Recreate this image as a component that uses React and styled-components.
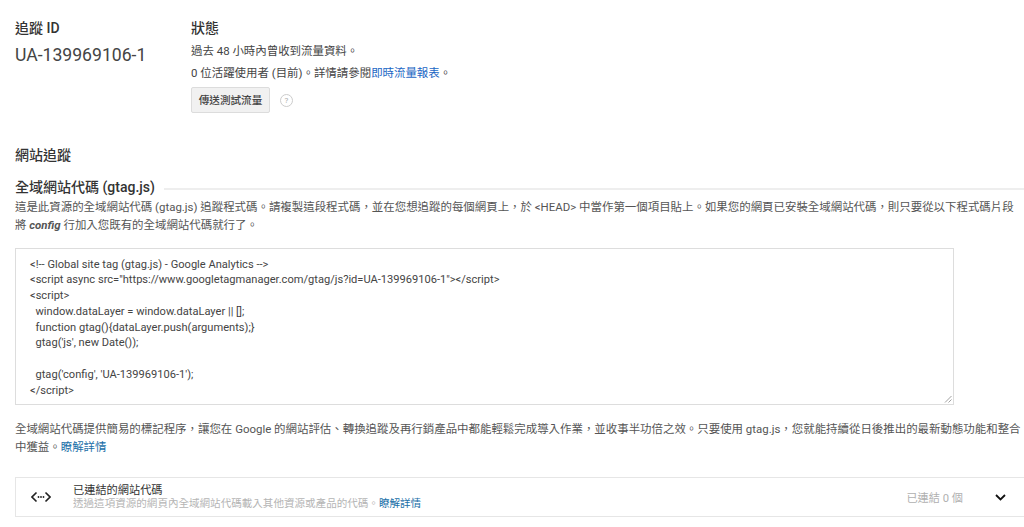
import React from "react";
import styled, { createGlobalStyle } from "styled-components";

const Global = createGlobalStyle`
  html, body { margin: 0; padding: 0; background: #fff; overflow: hidden; }
  body { font-family: Roboto, "Noto Sans CJK TC", sans-serif; color: #444; }
`;

const Page = styled.div`
  width: 1024px;
  height: 527px;
  padding: 20px 0 0 15px;
  box-sizing: border-box;
  overflow: hidden;
`;

const Top = styled.section`
  display: flex;
  height: 94px;
`;

const IdColumn = styled.div`
  width: 176px;
  flex: none;
`;

const StatusColumn = styled.div`
  display: flex;
  flex-direction: column;
  align-items: flex-start;
`;

const Label = styled.h3`
  margin: 0;
  font-size: 14px;
  line-height: 16px;
  font-weight: 500;
  color: #333;
`;

const TrackingId = styled.div`
  margin-top: 8px;
  font-size: 17.6px;
  line-height: 22px;
  color: #444;
`;

const StatusLine = styled.p`
  margin: ${(p) => p.$top}px 0 0;
  font-size: 11.45px;
  line-height: 16px;
  color: #444;
`;

const Link = styled.a`
  color: ${(p) => (p.$dark ? "#1a6fa8" : "#1a66c4")};
`;

const ButtonRow = styled.div`
  display: flex;
  align-items: center;
  margin-top: 6px;
`;

const TestButton = styled.button`
  width: 79px;
  height: 26px;
  padding: 0 0 2px;
  border: 1px solid #dcdcdc;
  border-radius: 2px;
  background: #f1f1f1;
  font: 500 10.6px Roboto, "Noto Sans CJK TC", sans-serif;
  color: #444;
`;

const Help = styled.span`
  display: flex;
  align-items: center;
  justify-content: center;
  width: 11px;
  height: 11px;
  margin-left: 10px;
  border: 1px solid #ccc;
  border-radius: 50%;
  font-size: 8px;
  color: #aaa;
`;

const SectionTitle = styled.h2`
  margin: 31px 0 0;
  font-size: 14px;
  line-height: 20px;
  font-weight: 500;
  color: #333;
`;

const LegendRow = styled.div`
  display: flex;
  align-items: center;
  margin-top: 12px;
  gap: 9px;
`;

const Legend = styled.h3`
  margin: 0;
  font-size: 14px;
  line-height: 20px;
  font-weight: 500;
  color: #333;
  white-space: nowrap;
`;

const Rule = styled.div`
  flex: 1;
  height: 2px;
  margin-top: 3px;
  background: #eee;
`;

const Paragraph = styled.p`
  margin: ${(p) => p.$top}px 0 0;
  width: 1009px;
  font-size: 11.45px;
  line-height: 18px;
  color: #555;
`;

const CodeBox = styled.pre`
  box-sizing: border-box;
  width: 939px;
  height: 157px;
  margin: 14px 0 0;
  padding: 7.5px 14px;
  border: 1px solid #ddd;
  font: 400 11.1px/15.75px Roboto, sans-serif;
  color: #444;
  position: relative;
`;

const Grip = styled.svg`
  position: absolute;
  right: 1px;
  bottom: 1px;
  width: 8px;
  height: 8px;
`;

const LinkedRow = styled.div`
  display: flex;
  align-items: center;
  box-sizing: border-box;
  height: 40px;
  margin-top: 21px;
  border: 1px solid #e6e6e6;
  border-right: 0;
`;

const CodeIcon = styled.svg`
  width: 20px;
  height: 12px;
  margin-left: 15px;
  flex: none;
`;

const LinkedText = styled.div`
  margin-left: 22px;
  flex: 1;
`;

const LinkedTitle = styled.div`
  font-size: 11.2px;
  line-height: 12px;
  color: #333;
`;

const LinkedSub = styled.div`
  font-size: 10.55px;
  line-height: 13px;
  color: #b5b5b5;
`;

const LinkedCount = styled.span`
  font-size: 11.2px;
  color: #b0b0b0;
`;

const Chevron = styled.svg`
  width: 11px;
  height: 7px;
  margin: 0 18px 0 32px;
`;

const code = `<!-- Global site tag (gtag.js) - Google Analytics -->
<script async src="https://www.googletagmanager.com/gtag/js?id=UA-139969106-1"></script>
<script>
  window.dataLayer = window.dataLayer || [];
  function gtag(){dataLayer.push(arguments);}
  gtag('js', new Date());

  gtag('config', 'UA-139969106-1');
</script>`;

export default function App() {
  return (
    <Page>
      <Global />
      <Top>
        <IdColumn>
          <Label>追蹤 ID</Label>
          <TrackingId>UA-139969106-1</TrackingId>
        </IdColumn>
        <StatusColumn>
          <Label>狀態</Label>
          <StatusLine $top={7}>過去 48 小時內曾收到流量資料。</StatusLine>
          <StatusLine $top={6}>0 位活躍使用者 (目前)。詳情請參閱<Link>即時流量報表</Link>。</StatusLine>
          <ButtonRow>
            <TestButton>傳送測試流量</TestButton>
            <Help>?</Help>
          </ButtonRow>
        </StatusColumn>
      </Top>
      <SectionTitle>網站追蹤</SectionTitle>
      <LegendRow>
        <Legend>全域網站代碼 (gtag.js)</Legend>
        <Rule />
      </LegendRow>
      <Paragraph $top={1}>
        這是此資源的全域網站代碼 (gtag.js) 追蹤程式碼。請複製這段程式碼，並在您想追蹤的每個網頁上，於 &lt;HEAD&gt; 中當作第一個項目貼上。如果您的網頁已安裝全域網站代碼，則只要從以下程式碼片段將 <b><i>config</i></b> 行加入您既有的全域網站代碼就行了。
      </Paragraph>
      <CodeBox>
        {code}
        <Grip viewBox="0 0 8 8"><path d="M1 7.5 7.5 1M4.5 7.5 7.5 4.5" stroke="#888" strokeWidth="0.8" fill="none" /></Grip>
      </CodeBox>
      <Paragraph $top={15}>
        全域網站代碼提供簡易的標記程序，讓您在 Google 的網站評估、轉換追蹤及再行銷產品中都能輕鬆完成導入作業，並收事半功倍之效。只要使用 gtag.js，您就能持續從日後推出的最新動態功能和整合中獲益。<Link $dark>瞭解詳情</Link>
      </Paragraph>
      <LinkedRow>
        <CodeIcon viewBox="0 0 20 12">
          <path d="M5.5 1.500 1 6l4.500 4.500M14.500 1.500 19 6l-4.500 4.500" stroke="#222" strokeWidth="1.600" fill="none" />
          <circle cx="7.500" cy="6" r="0.900" fill="#222" /><circle cx="10" cy="6" r="0.900" fill="#222" /><circle cx="12.500" cy="6" r="0.900" fill="#222" />
        </CodeIcon>
        <LinkedText>
          <LinkedTitle>已連結的網站代碼</LinkedTitle>
          <LinkedSub>透過這項資源的網頁內全域網站代碼載入其他資源或產品的代碼。<Link $dark>瞭解詳情</Link></LinkedSub>
        </LinkedText>
        <LinkedCount>已連結 0 個</LinkedCount>
        <Chevron viewBox="0 0 11 7"><path d="M1 1l4.500 4.500L10 1" stroke="#111" strokeWidth="1.800" fill="none" /></Chevron>
      </LinkedRow>
    </Page>
  );
}
